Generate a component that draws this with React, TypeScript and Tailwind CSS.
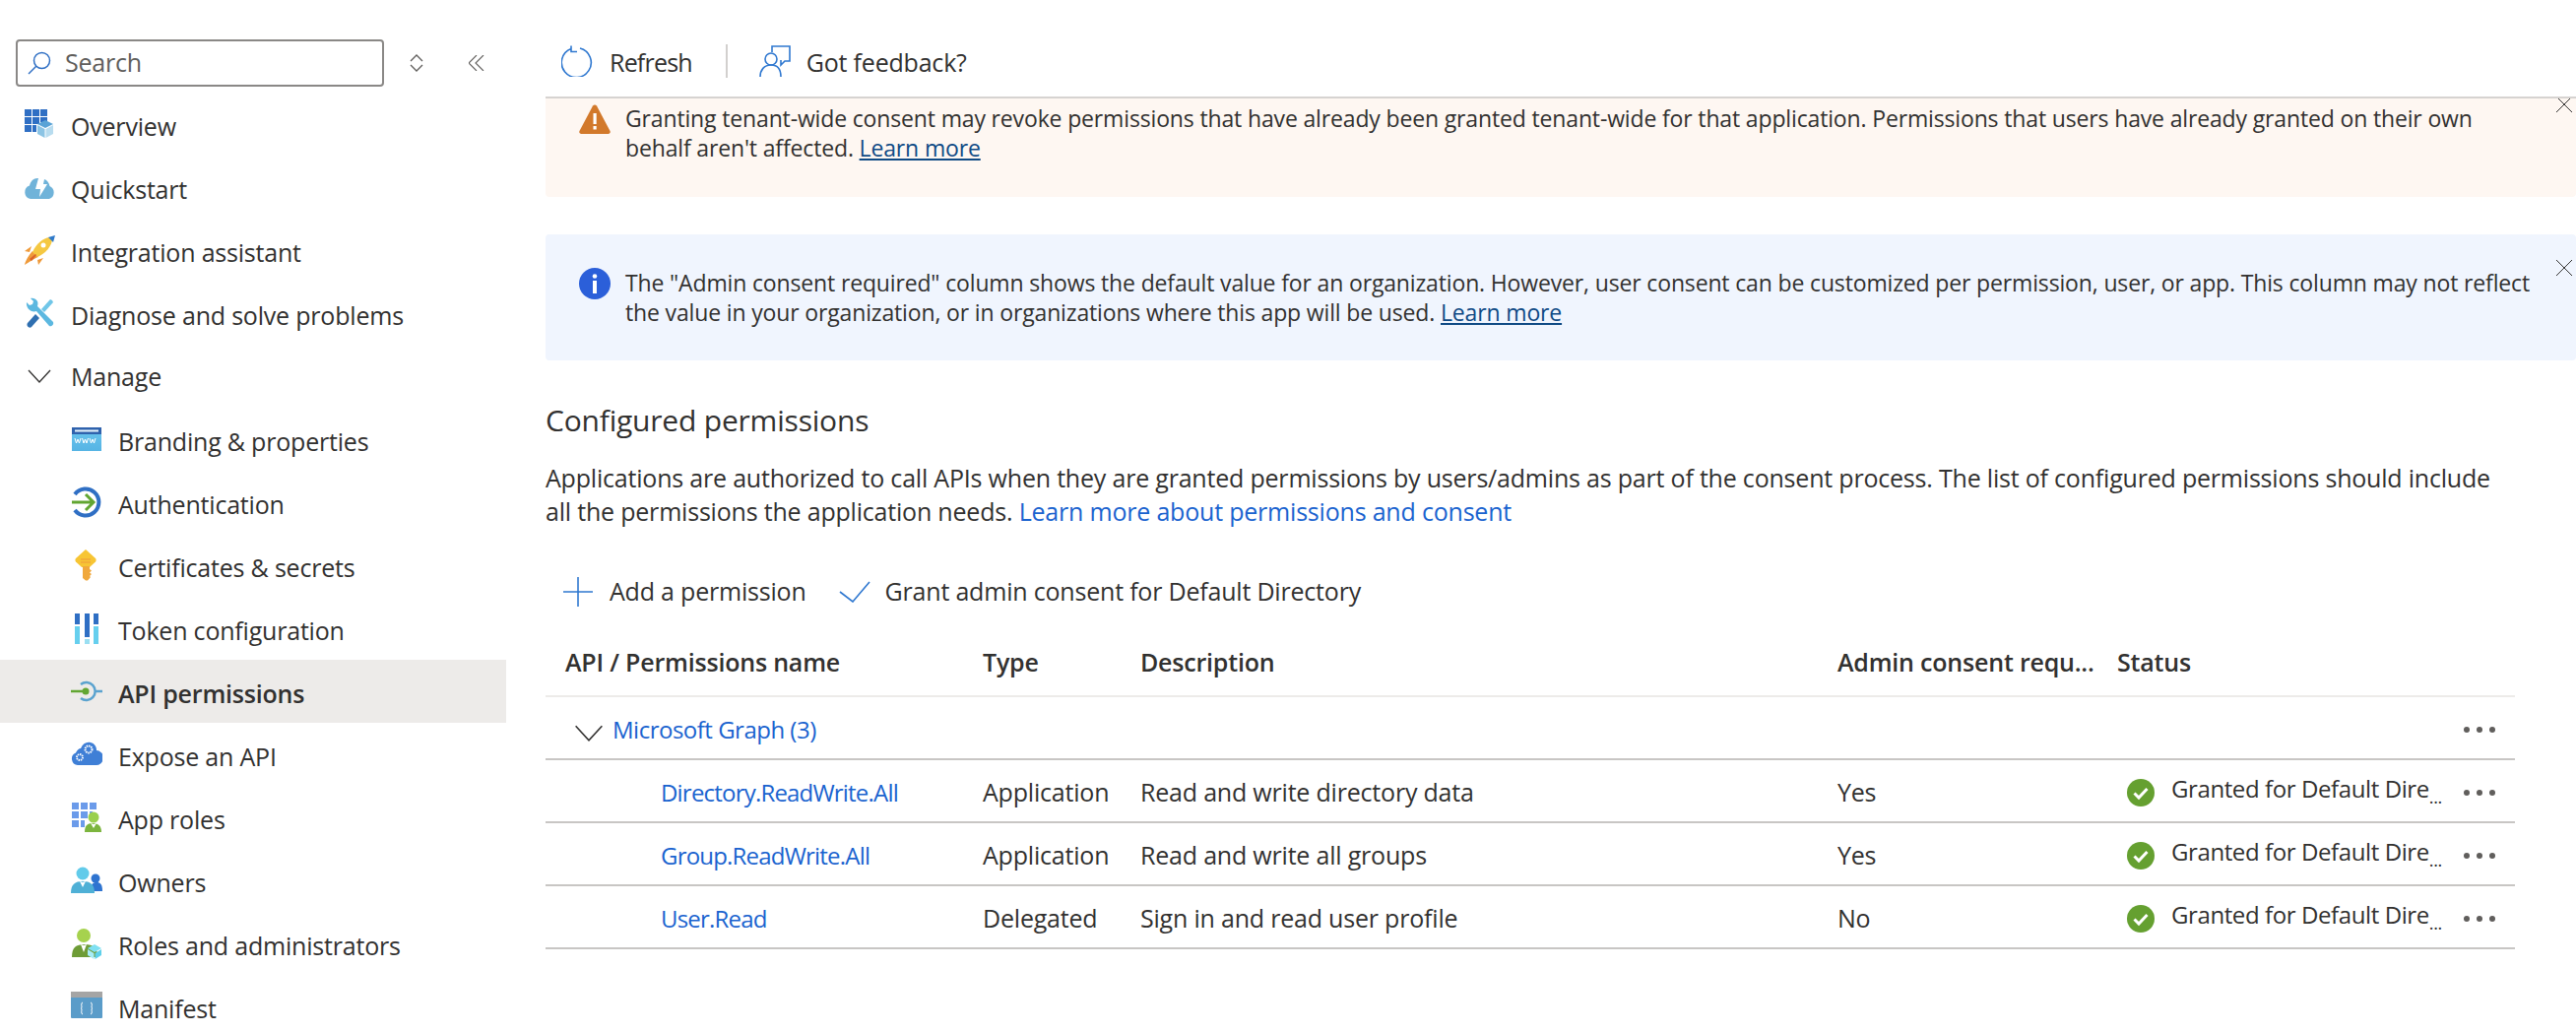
import React from 'react';

const FONT = "font-['Open_Sans','Noto_Sans',sans-serif]";

const OverviewIcon = () => (
  <svg viewBox="0 0 32 32" className="w-8 h-8">
    <path fill="#2f6fc4" d="M1 1h7v7H1zM9 1h7v7H9zM17 1h7v7h-7zM1 9h7v7H1zM9 9h7v7H9zM17 9h7v5h-7zM1 17h7v7H1zM9 17h4v7H9z" />
    <path fill="#5aa3d6" d="M14 16l8-4 8 4-8 4z" />
    <path fill="#8cc4e4" d="M14 17l7.500 4v9L14 26z" />
    <path fill="#b8dcef" d="M30 17l-7.500 4v9l7.500-4z" />
  </svg>
);
const QuickstartIcon = () => (
  <svg viewBox="0 0 32 32" className="w-8 h-8">
    <path fill="#70b3d9" d="M7 28a7 7 0 0 1-1-13.500C7 10 10 7 14 7h1l-3 11h5l-1 8 8-13h-4l1-5c3 1 5 4 5.500 7A7 7 0 0 1 26 28z" />
  </svg>
);
const RocketIcon = () => (
  <svg viewBox="0 0 32 32" className="w-8 h-8">
    <path fill="#ef9a3a" d="M8 12l-7 5 5 1zM20 24l-5 7-1-5zM9 17l6 6c-4 1-10 6-14 8 1-5 5-11 8-14z" />
    <path fill="#f5c842" d="M9 18C13 9 20 4 26 3l3 3c-1 6-6 13-15 17z" />
    <path fill="#2f79c9" d="M25 3l7-2-2 7z" />
    <circle cx="20" cy="11" r="2.500" fill="#fff" />
    <path fill="#d9622b" d="M6 25l6-5 1 1-5 6z" />
  </svg>
);
const WrenchIcon = () => (
  <svg viewBox="0 0 32 32" className="w-8 h-8">
    <path fill="#5cb8e0" d="M3 5l3 3 3-1 1-3-3-3c5-1 9 3 7 8l16 16c1 3-2 5-4 4L13 14C8 16 2 11 3 5z" />
    <path fill="#2f6fb0" d="M12 17l4 4-8 9c-2 2-6-1-4-4z" />
    <path fill="#70c6e8" d="M18 12l9-10 2 1 1 2-9 10z" />
  </svg>
);
const BrandingIcon = () => (
  <svg viewBox="0 0 32 32" className="w-8 h-8">
    <defs>
      <linearGradient id="brand" x1="0" y1="0" x2="0" y2="1">
        <stop offset="0" stopColor="#6cc6ee" />
        <stop offset="1" stopColor="#56b4e4" />
      </linearGradient>
    </defs>
    <rect x="1" y="4" width="30" height="24" fill="url(#brand)" />
    <rect x="1" y="4" width="30" height="7" fill="#2f62ad" />
    <rect x="4" y="6.500" width="24" height="2" fill="#e8f3fb" />
    <path fill="none" stroke="#fff" strokeWidth="1" d="M4 15l1.500 5 1.500-4 1.500 4 1.500-5M11.500 15l1.500 5 1.500-4 1.500 4 1.500-5M19 15l1.500 5 1.500-4 1.500 4 1.500-5" />
  </svg>
);
const AuthIcon = () => (
  <svg viewBox="0 0 32 32" className="w-8 h-8">
    <path fill="none" stroke="#2f6fc4" strokeWidth="4" d="M4 8a13.500 13.500 0 1 1 0 16" />
    <path fill="none" stroke="#62a632" strokeWidth="3" d="M1 16h22M15 8l8 8-8 8" />
  </svg>
);
const KeyIcon = () => (
  <svg viewBox="0 0 32 32" className="w-8 h-8">
    <path fill="#f7c534" d="M15 0l10 9c.8 1 .8 2.500 0 3.500L19 18h-8L5 12.500c-.8-1-.8-2.500 0-3.500z" />
    <path fill="#f0a83c" d="M12 17h7v3l2 1.500-2 2 2 1.500-2 2 1 1-3 3.500h-2l-3-2.500z" />
    <path fill="none" stroke="#ef9a3a" strokeWidth="1" d="M10 10h10M10 13h10" />
  </svg>
);
const TokenIcon = () => (
  <svg viewBox="0 0 32 32" className="w-8 h-8">
    <rect x="4" y="1" width="5" height="11" fill="#2f6fc4" />
    <rect x="4" y="14" width="5" height="18" fill="#66cfee" />
    <rect x="14" y="1" width="5" height="24" fill="#2f6fc4" />
    <rect x="14" y="27" width="5" height="5" fill="#9adff2" />
    <rect x="23" y="1" width="5" height="11" fill="#2f6fc4" />
    <rect x="23" y="14" width="5" height="18" fill="#66cfee" />
  </svg>
);
const ApiIcon = () => (
  <svg viewBox="0 0 32 32" className="w-8 h-8">
    <path fill="none" stroke="#5ba3cf" strokeWidth="2.500" d="M10 9a9 9 0 1 1 0 14M24 16h8" />
    <path fill="none" stroke="#62a632" strokeWidth="2.500" d="M0 16h14" />
    <circle cx="15" cy="16" r="3.500" fill="#62a632" />
  </svg>
);
const ExposeIcon = () => (
  <svg viewBox="0 0 32 32" className="w-8 h-8">
    <path fill="#3f7fd6" d="M7 27a6.500 6.500 0 0 1-2-12.500C6 12 8 10 10 10c2-5 6-7 10-6 4 1 6 4 6 8a7.500 7.500 0 0 1-1 15z" />
    <circle cx="9" cy="19" r="3" fill="none" stroke="#fff" strokeWidth="1.800" strokeDasharray="1.500 0.800" />
    <circle cx="18" cy="11" r="3.500" fill="none" stroke="#fff" strokeWidth="2" strokeDasharray="1.500 0.800" />
  </svg>
);
const AppRolesIcon = () => (
  <svg viewBox="0 0 32 32" className="w-8 h-8">
    <path fill="#6b9bea" d="M1 1h7v7H1zM10 1h7v7h-7zM19 1h7v7h-7zM1 10h7v7H1zM10 10h7v7h-7zM19 10h3v5h-3zM1 19h7v7H1zM10 19h4v7h-4z" />
    <path fill="#7cb53e" d="M14 31c0-7 3-9 8-9s9 2 9 9z" />
    <circle cx="23" cy="16" r="5.500" fill="#9ad04e" />
    <path fill="#fff" d="M20 22l3 5 3-5-3 1z" />
  </svg>
);
const OwnersIcon = () => (
  <svg viewBox="0 0 32 32" className="w-8 h-8">
    <path fill="#2f74d0" d="M20 27c0-7 2-9 6-9s6 2 6 9z" />
    <circle cx="25" cy="14" r="4.500" fill="#2f74d0" />
    <path fill="#4fb0d6" d="M0 29c0-9 4-12 12-12s12 3 12 12z" />
    <circle cx="12" cy="9" r="6.500" fill="#62cbea" />
    <path fill="#fff" d="M9 17l3 6 3-6-3 1z" />
  </svg>
);
const RolesIcon = () => (
  <svg viewBox="0 0 32 32" className="w-8 h-8">
    <path fill="#6e9c36" d="M1 30c0-10 4-13 13-13s13 3 13 13z" />
    <circle cx="13" cy="8" r="7" fill="#a6d24e" />
    <path fill="#fff" d="M10 17l3 8 3-8-3 1z" />
    <path fill="#7fe0f2" d="M17 21l7-4 7 4-7 4z" />
    <path fill="#a7ecf7" d="M17 22l6.500 4v6L17 28z" />
    <path fill="#5fd0ea" d="M31 22l-6.500 4v6l6.500-4z" />
  </svg>
);
const ManifestIcon = () => (
  <svg viewBox="0 0 32 32" className="w-8 h-8">
    <rect x="0" y="1" width="32" height="27" rx="1" fill="#5a9cc9" />
    <rect x="0" y="1" width="32" height="6" fill="#a5a5a5" />
    <path fill="none" stroke="#fff" strokeWidth="1" d="M12 12c-2 0-1 4-1 5s-1 1-1 1 1 0 1 1 -1 5 1 5M20 12c2 0 1 4 1 5s1 1 1 1-1 0-1 1 1 5-1 5" />
  </svg>
);
const ChevronDown = ({ className }: { className: string }) => (
  <svg viewBox="0 0 24 14" className={className} fill="none" stroke="#323130" strokeWidth="1.300">
    <path d="M1 1l11 12L23 1" />
  </svg>
);

const CheckCircle = () => (
  <svg viewBox="0 0 28 28" className="w-7 h-7 shrink-0">
    <circle cx="14" cy="14" r="14" fill="#65a030" />
    <path d="M7.500 14.500l4.500 4.500 8.500-9" fill="none" stroke="#fff" strokeWidth="3" />
  </svg>
);
const Dots = () => (
  <svg viewBox="0 0 32 6" className="w-8 h-1.5 shrink-0">
    <circle cx="3" cy="3" r="3" fill="#605e5c" />
    <circle cx="16" cy="3" r="3" fill="#605e5c" />
    <circle cx="29" cy="3" r="3" fill="#605e5c" />
  </svg>
);
const CloseIcon = () => (
  <svg viewBox="0 0 16 16" className="w-4 h-4" fill="none" stroke="#323130" strokeWidth="1">
    <path d="M0 0l16 16M16 0L0 16" />
  </svg>
);

const NAV_TOP = [
  { label: 'Overview', icon: <OverviewIcon /> },
  { label: 'Quickstart', icon: <QuickstartIcon /> },
  { label: 'Integration assistant', icon: <RocketIcon /> },
  { label: 'Diagnose and solve problems', icon: <WrenchIcon /> },
];

const NAV_MANAGE = [
  { label: 'Branding & properties', icon: <BrandingIcon /> },
  { label: 'Authentication', icon: <AuthIcon /> },
  { label: 'Certificates & secrets', icon: <KeyIcon /> },
  { label: 'Token configuration', icon: <TokenIcon /> },
  { label: 'API permissions', icon: <ApiIcon />, active: true },
  { label: 'Expose an API', icon: <ExposeIcon /> },
  { label: 'App roles', icon: <AppRolesIcon /> },
  { label: 'Owners', icon: <OwnersIcon /> },
  { label: 'Roles and administrators', icon: <RolesIcon /> },
  { label: 'Manifest', icon: <ManifestIcon /> },
];

const PERMISSIONS = [
  { name: 'Directory.ReadWrite.All', type: 'Application', description: 'Read and write directory data', admin: 'Yes' },
  { name: 'Group.ReadWrite.All', type: 'Application', description: 'Read and write all groups', admin: 'Yes' },
  { name: 'User.Read', type: 'Delegated', description: 'Sign in and read user profile', admin: 'No' },
];

const GRID = 'grid grid-cols-[424px_160px_708px_284px_1fr] items-center';

const App: React.FC = () => {
  return (
    <div className={`${FONT} flex h-[1048px] w-[2616px] overflow-hidden bg-white text-[25px] text-[#323130] tracking-[-0.2px]`}>
      {/* SIDEBAR */}
      <aside className="w-[514px] shrink-0 pt-10">
        <div className="flex items-center mb-1.5">
          <div className="ml-4 w-[374px] h-12 border-2 border-[#8a8886] rounded-[4px] flex items-center pl-[10px] text-[#605e5c]">
            <svg viewBox="0 0 24 24" className="w-6 h-6 mr-[14px]" fill="none" strokeWidth="1.500">
              <circle cx="14.500" cy="9.500" r="8" stroke="#2f6fc4" />
              <path d="M9 15L1 23" stroke="#2f6fc4" />
            </svg>
            Search
          </div>
          <svg viewBox="0 0 14 18" className="ml-[26px] w-[14px] h-[18px]" fill="none" stroke="#605e5c" strokeWidth="1.300">
            <path d="M1 7l6-6 6 6M1 11l6 6 6-6" />
          </svg>
          <svg viewBox="0 0 16 16" className="ml-[46px] w-4 h-4" fill="none" stroke="#605e5c" strokeWidth="1.100">
            <path d="M8 0L0 8l8 8M15 0L7 8l8 8" />
          </svg>
        </div>

        {NAV_TOP.map((item) => (
          <div key={item.label} className="h-16 flex items-center pl-6 gap-4">
            {item.icon}
            <span className="mt-[5px]">{item.label}</span>
          </div>
        ))}
        <div className="h-16 flex items-center pl-[28px] gap-5">
          <ChevronDown className="w-6 h-[14px]" />
          <span className="mt-[1px]">Manage</span>
        </div>
        {NAV_MANAGE.map((item) => (
          <div
            key={item.label}
            className={`h-16 flex items-center pl-[72px] gap-4 ${item.active ? 'bg-[#edebe9] font-semibold' : ''}`}
          >
            {item.icon}
            <span className="mt-[5px]">{item.label}</span>
          </div>
        ))}
      </aside>

      {/* CONTENT */}
      <main className="flex-1 pl-10 min-w-0">
        <div className="h-[100px] pt-[45px] border-b-2 border-[#d6d3d1]">
          <div className="flex items-center h-[34px]">
            <svg viewBox="0 0 32 32" className="ml-4 w-8 h-8" fill="none" stroke="#2f78d0" strokeWidth="1.600">
              <path d="M10 3.500a15 15 0 1 0 9 -0.500M10 0.500v6h6" />
            </svg>
            <span className="ml-[17px] mt-[3px] tracking-[-0.8px]">Refresh</span>
            <div className="ml-[34px] w-[2px] h-[34px] bg-[#d2d0ce]" />
            <svg viewBox="0 0 32 32" className="ml-8 w-8 h-8" fill="none" stroke="#2f78d0" strokeWidth="1.600">
              <path d="M13 7V1h18v15h-5l-4 4v-5" />
              <circle cx="12" cy="14" r="6" />
              <path d="M1 32c0-7 4-12 11-12s10 5 10 12" />
            </svg>
            <span className="ml-4 mt-[3px]">Got feedback?</span>
          </div>
        </div>

        {/* BANNERS */}
        <div className="relative h-[100px] bg-[#fef7f2] rounded-b-[4px] overflow-hidden pt-[5px] pl-[81px] text-[23px] leading-[30px] tracking-[-0.15px]">
          <svg viewBox="0 0 32 30" className="absolute left-[34px] top-[6px] w-8 h-[30px]">
            <path fill="#d2792b" d="M14 1.500c1-1.500 3-1.500 4 0L31.500 27c.7 1.500 0 3-2 3h-27c-2 0-2.700-1.500-2-3z" />
            <rect x="14.500" y="9" width="3.200" height="11" fill="#fff" />
            <rect x="14.500" y="22" width="3.200" height="3.500" fill="#fff" />
          </svg>
          <p className="whitespace-nowrap">
            Granting tenant-wide consent may revoke permissions that have already been granted tenant-wide for that application. Permissions that users have already granted on their own
            <br />
            behalf aren't affected. <a className="text-[#0f4a85] underline">Learn more</a>
          </p>
          <div className="absolute right-1 top-[-2px]"><CloseIcon /></div>
        </div>

        <div className="relative mt-[38px] h-[128px] bg-[#f0f5fe] rounded-[4px] pt-[34px] pl-[81px] text-[23px] leading-[30px] tracking-[-0.15px]">
          <svg viewBox="0 0 32 32" className="absolute left-[34px] top-[34px] w-8 h-8">
            <circle cx="16" cy="16" r="16" fill="#2b5fd9" />
            <rect x="14" y="13" width="4" height="13" fill="#fff" />
            <circle cx="16" cy="8.500" r="2.300" fill="#fff" />
          </svg>
          <p className="whitespace-nowrap">
            The "Admin consent required" column shows the default value for an organization. However, user consent can be customized per permission, user, or app. This column may not reflect
            <br />
            the value in your organization, or in organizations where this app will be used. <a className="text-[#0f4a85] underline">Learn more</a>
          </p>
          <div className="absolute right-1 top-[26px]"><CloseIcon /></div>
        </div>

        {/* CONFIGURED PERMISSIONS */}
        <h2 className="mt-[40px] text-[30px] leading-[42px]">Configured permissions</h2>
        <p className="mt-5 leading-[34px] whitespace-nowrap">
          Applications are authorized to call APIs when they are granted permissions by users/admins as part of the consent process. The list of configured permissions should include
          <br />
          all the permissions the application needs. <a className="text-[#1a63cf]">Learn more about permissions and consent</a>
        </p>

        <div className="mt-[45px] h-[40px] flex items-center">
          <svg viewBox="0 0 30 30" className="ml-[18px] w-[30px] h-[30px]" fill="none" stroke="#2f78d0" strokeWidth="1.600">
            <path d="M15 0v30M0 15h30" />
          </svg>
          <span className="ml-[17px]">Add a permission</span>
          <svg viewBox="0 0 32 22" className="ml-[33px] w-8 h-[22px]" fill="none" stroke="#2f78d0" strokeWidth="1.600">
            <path d="M1 11l13 10L31 1" />
          </svg>
          <span className="ml-[15px]">Grant admin consent for Default Directory</span>
        </div>

        {/* TABLE */}
        <div className="mt-[23px] w-[2000px]">
          <div className={`${GRID} h-[64px] pl-5 pb-1 font-semibold border-b-2 border-[#edebe9]`}>
            <span>API / Permissions name</span>
            <span>Type</span>
            <span>Description</span>
            <span className="whitespace-nowrap">Admin consent requ...</span>
            <span>Status</span>
          </div>
          <div className="h-[64px] pt-1 flex items-center border-b-2 border-[#c8c6c4]">
            <ChevronDown className="ml-[28px] w-8 h-[17px] mt-[6px]" />
            <a className="ml-2 text-[24px] tracking-[-0.5px] text-[#1a63cf]">Microsoft Graph (3)</a>
            <div className="ml-auto mr-5 flex"><Dots /></div>
          </div>
          {PERMISSIONS.map((perm) => (
            <div key={perm.name} className={`${GRID} h-[64px] pl-5 pt-1 border-b-2 border-[#c8c6c4]`}>
              <a className="pl-[97px] text-[24px] tracking-[-0.8px] text-[#1a63cf]">{perm.name}</a>
              <span>{perm.type}</span>
              <span>{perm.description}</span>
              <span>{perm.admin}</span>
              <div className="flex items-center pl-[10px]">
                <CheckCircle />
                <span className="ml-[17px] w-[297px] shrink-0 -mt-[4px] text-[24px] tracking-[-0.4px] whitespace-nowrap">
                  Granted for Default Dire<span className="text-[18px] align-[-6px]">...</span>
                </span>
                <Dots />
              </div>
            </div>
          ))}
        </div>
      </main>
    </div>
  );
};

export default App;
